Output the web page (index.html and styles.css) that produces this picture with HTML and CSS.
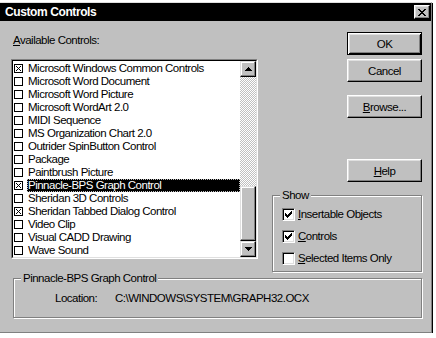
FILE: index.html
```html
<!DOCTYPE html>
<html>
<head>
<meta charset="utf-8">
<link rel="stylesheet" href="styles.css">
</head>
<body>
<div class="window">
  <div class="titlebar">
    <span class="title">Custom Controls</span>
    <span class="close"><svg width="8" height="7" viewBox="0 0 8 7"><path d="M0 0h2v1h-2zM6 0h2v1h-2zM1 1h2v1h-2zM5 1h2v1h-2zM2 2h4v1h-4zM3 3h2v1h-2zM2 4h4v1h-4zM1 5h2v1h-2zM5 5h2v1h-2zM0 6h2v1h-2zM6 6h2v1h-2z" fill="#000"/></svg></span>
  </div>
  <div class="body">
    <div class="top">
      <div class="leftcol">
        <div class="label"><u>A</u>vailable Controls:</div>
        <div class="listbox">
          <div class="listinner">
            <ul class="items">
              <li class="item"><span class="lcb"><svg width="9" height="9" viewBox="0 0 9 9"><rect x="0.5" y="0.5" width="8" height="8" fill="#fff" stroke="#000"/><path d="M2 2L7 7M7 2L2 7" stroke="#000" stroke-width="1"/></svg></span><span class="txt">Microsoft Windows Common Controls</span></li>
              <li class="item"><span class="lcb box"></span><span class="txt">Microsoft Word Document</span></li>
              <li class="item"><span class="lcb box"></span><span class="txt">Microsoft Word Picture</span></li>
              <li class="item"><span class="lcb box"></span><span class="txt">Microsoft WordArt 2.0</span></li>
              <li class="item"><span class="lcb box"></span><span class="txt">MIDI Sequence</span></li>
              <li class="item"><span class="lcb box"></span><span class="txt">MS Organization Chart 2.0</span></li>
              <li class="item"><span class="lcb box"></span><span class="txt">Outrider SpinButton Control</span></li>
              <li class="item"><span class="lcb box"></span><span class="txt">Package</span></li>
              <li class="item"><span class="lcb box"></span><span class="txt">Paintbrush Picture</span></li>
              <li class="item"><span class="lcb"><svg width="9" height="9" viewBox="0 0 9 9"><rect x="0.5" y="0.5" width="8" height="8" fill="#fff" stroke="#000"/><path d="M2 2L7 7M7 2L2 7" stroke="#000" stroke-width="1"/></svg></span><span class="txt selected">Pinnacle-BPS Graph Control</span></li>
              <li class="item"><span class="lcb box"></span><span class="txt">Sheridan 3D Controls</span></li>
              <li class="item"><span class="lcb"><svg width="9" height="9" viewBox="0 0 9 9"><rect x="0.5" y="0.5" width="8" height="8" fill="#fff" stroke="#000"/><path d="M2 2L7 7M7 2L2 7" stroke="#000" stroke-width="1"/></svg></span><span class="txt">Sheridan Tabbed Dialog Control</span></li>
              <li class="item"><span class="lcb box"></span><span class="txt">Video Clip</span></li>
              <li class="item"><span class="lcb box"></span><span class="txt">Visual CADD Drawing</span></li>
              <li class="item"><span class="lcb box"></span><span class="txt">Wave Sound</span></li>
            </ul>
            <div class="scrollbar">
              <div class="sbtn"><svg width="7" height="4" viewBox="0 0 7 4"><path d="M3 0h1v1h-1zM2 1h3v1h-3zM1 2h5v1h-5zM0 3h7v1h-7z" fill="#000"/></svg></div>
              <div class="track"></div>
              <div class="thumb"></div>
              <div class="sbtn"><svg width="7" height="4" viewBox="0 0 7 4"><path d="M0 0h7v1h-7zM1 1h5v1h-5zM2 2h3v1h-3zM3 3h1v1h-1z" fill="#000"/></svg></div>
            </div>
          </div>
        </div>
      </div>
      <div class="rightcol">
        <div class="btn default">OK</div>
        <div class="btn cancel">Cancel</div>
        <div class="btn browse"><u>B</u>rowse...</div>
        <div class="btn help"><u>H</u>elp</div>
        <fieldset class="group show">
          <legend>Show</legend>
          <div class="opt"><span class="chk"><svg width="7" height="7" viewBox="0 0 7 7"><path d="M0 2h1v3h-1zM1 3h1v3h-1zM2 4h1v3h-1zM3 3h1v3h-1zM4 2h1v3h-1zM5 1h1v3h-1zM6 0h1v3h-1z" fill="#000"/></svg></span><span><u>I</u>nsertable Objects</span></div>
          <div class="opt"><span class="chk"><svg width="7" height="7" viewBox="0 0 7 7"><path d="M0 2h1v3h-1zM1 3h1v3h-1zM2 4h1v3h-1zM3 3h1v3h-1zM4 2h1v3h-1zM5 1h1v3h-1zM6 0h1v3h-1z" fill="#000"/></svg></span><span><u>C</u>ontrols</span></div>
          <div class="opt"><span class="chk"></span><span><u>S</u>elected Items Only</span></div>
        </fieldset>
      </div>
    </div>
    <fieldset class="group info">
      <legend>Pinnacle-BPS Graph Control</legend>
      <div class="locrow"><span class="loclabel">Location:</span><span>C:\WINDOWS\SYSTEM\GRAPH32.OCX</span></div>
    </fieldset>
  </div>
</div>
</body>
</html>
```
FILE: styles.css
```css
* { box-sizing: border-box; }
html, body { margin: 0; padding: 0; background: #fff; }
body {
  font-family: "Liberation Sans", Arial, sans-serif;
  font-size: 11.5px;
  letter-spacing: -0.5px;
  color: #000;
}
.window {
  width: 432px;
  height: 331px;
  margin-top: 2px;
  background: #c0c0c0;
  border-top: 1px solid #dfdfdf;
  border-right: 1px solid #808080;
  border-bottom: 1px solid #808080;
  box-shadow: 1px 1px 0 #000;
  display: flex;
  flex-direction: column;
}
.titlebar {
  height: 18px;
  background: #000;
  display: flex;
  align-items: center;
  padding: 0 1px 0 5px;
}
.title {
  flex: 1;
  color: #fff;
  font-weight: bold;
  font-size: 12px;
  letter-spacing: -0.4px;
}
.close {
  width: 16px;
  height: 14px;
  background: #c0c0c0;
  border: 1px solid;
  border-color: #fff #000 #000 #fff;
  box-shadow: inset -1px -1px #808080, inset 1px 1px #dfdfdf;
  display: flex;
  align-items: center;
  justify-content: center;
}
.close svg { display: block; }
.body {
  flex: 1;
  padding: 0 9px 0 11px;
}
.top {
  display: flex;
  align-items: flex-start;
  gap: 14px;
}
.leftcol { width: 247px; }
.label {
  margin-top: 13px;
  padding-left: 2px;
  line-height: 13px;
}
.listbox {
  margin-top: 12px;
  width: 247px;
  height: 200px;
  border: 1px solid;
  border-color: #808080 #fff #fff #808080;
}
.listinner {
  height: 100%;
  border: 1px solid;
  border-color: #000 #dfdfdf #dfdfdf #000;
  background: #fff;
  display: flex;
}
.items {
  flex: 1;
  list-style: none;
  margin: 0;
  padding: 1px 0 0 0;
}
.item {
  display: flex;
  align-items: center;
  height: 13px;
}
.lcb {
  width: 9px;
  height: 9px;
  margin: 0 4px 0 1px;
  flex: none;
}
.lcb svg { display: block; }
.lcb.box { border: 1px solid #000; background: #fff; }
.txt {
  flex: 1;
  line-height: 13px;
  padding: 0 1px;
  white-space: nowrap;
}
.txt.selected {
  background: #000;
  color: #fff;
  outline: 1px dotted #c0c0c0;
  outline-offset: -1px;
}
.scrollbar {
  width: 16px;
  display: flex;
  flex-direction: column;
}
.sbtn, .thumb {
  background: #c0c0c0;
  border: 1px solid;
  border-color: #dfdfdf #000 #000 #dfdfdf;
  box-shadow: inset -1px -1px #808080, inset 1px 1px #fff;
}
.sbtn {
  height: 16px;
  display: flex;
  align-items: center;
  justify-content: center;
}
.sbtn svg { display: block; }
.track {
  flex: 1;
  background-color: #fff;
  background-image: conic-gradient(#fff 25%, #c0c0c0 0 50%, #fff 0 75%, #c0c0c0 0);
  background-size: 2px 2px;
}
.thumb { height: 55px; }
.rightcol {
  width: 150px;
  padding-top: 11px;
  display: flex;
  flex-direction: column;
  align-items: flex-end;
}
.btn {
  width: 75px;
  height: 23px;
  display: flex;
  align-items: center;
  justify-content: center;
  border: 1px solid;
  border-color: #fff #000 #000 #fff;
  box-shadow: inset -1px -1px #808080, inset 1px 1px #dfdfdf;
}
.btn.default {
  border-color: #000;
  box-shadow: inset 1px 1px #fff, inset -1px -1px #000, inset 2px 2px #dfdfdf, inset -2px -2px #808080;
}
.cancel { margin-top: 4px; }
.browse { margin-top: 13px; }
.help { margin-top: 41px; }
.group {
  margin: 0;
  border: 1px solid #808080;
  box-shadow: inset 1px 1px #fff, 1px 1px #fff;
  min-inline-size: 0;
}
.group legend {
  padding: 0 2px;
  margin-left: -2px;
  line-height: 13px;
  background: #c0c0c0;
}
.show {
  align-self: stretch;
  margin-top: 7px;
  padding: 4px 9px 5px 9px;
  display: flex;
  flex-direction: column;
  gap: 6px;
}
.opt {
  height: 16px;
  display: flex;
  align-items: center;
}
.chk {
  width: 13px;
  height: 13px;
  margin-right: 3px;
  background: #fff;
  border: 1px solid;
  border-color: #808080 #fff #fff #808080;
  box-shadow: inset 1px 1px #000, inset -1px -1px #dfdfdf;
  display: flex;
  align-items: center;
  justify-content: center;
  flex: none;
}
.chk svg { display: block; }
.info {
  margin-left: 2px;
  width: 409px;
  padding: 7px 9px 12px 9px;
}
.locrow {
  line-height: 13px;
  padding-left: 32px;
  display: flex;
}
.loclabel { width: 60px; }
```
